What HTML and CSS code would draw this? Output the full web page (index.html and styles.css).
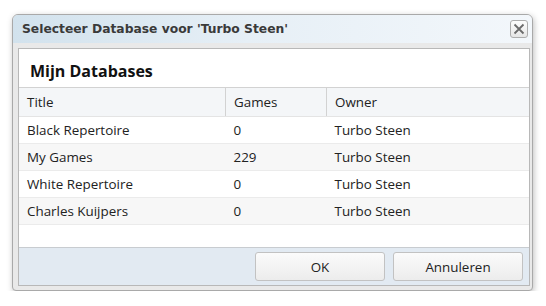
FILE: index.html
```html
<!DOCTYPE html>
<html lang="nl">
<head>
    <meta charset="UTF-8">
    <meta name="viewport" content="width=device-width, initial-scale=1.0">
    <title>Selecteer Database</title>
    <link rel="stylesheet" href="styles.css">
</head>
<body>
    <div class="dialog">
        <div class="titlebar">
            <span class="title">Selecteer Database voor 'Turbo Steen'</span>
            <button class="close" title="Sluiten">
                <svg width="12" height="12" viewBox="0 0 12 12">
                    <path d="M1.5 1.5 L10.5 10.5 M10.5 1.5 L1.5 10.5" stroke="#6b6b6b" stroke-width="1.8" fill="none"/>
                </svg>
            </button>
        </div>
        <div class="frame">
            <div class="panel">
                <h2>Mijn Databases</h2>
                <table class="grid">
                    <thead>
                        <tr>
                            <th class="col-title">Title</th>
                            <th class="col-games">Games</th>
                            <th>Owner</th>
                        </tr>
                    </thead>
                    <tbody>
                        <tr><td>Black Repertoire</td><td>0</td><td>Turbo Steen</td></tr>
                        <tr><td>My Games</td><td>229</td><td>Turbo Steen</td></tr>
                        <tr><td>White Repertoire</td><td>0</td><td>Turbo Steen</td></tr>
                        <tr><td>Charles Kuijpers</td><td>0</td><td>Turbo Steen</td></tr>
                    </tbody>
                </table>
                <div class="spacer"></div>
                <div class="footer">
                    <button class="button">OK</button>
                    <button class="button">Annuleren</button>
                </div>
            </div>
        </div>
    </div>
</body>
</html>
```
FILE: styles.css
```css
body {
    margin: 0;
    background-color: #fff;
    font-family: "Open Sans", "Noto Sans", sans-serif;
    color: #222;
}
.dialog {
    width: 519px;
    margin: 14px 0 0 12px;
    border: 1px solid #a9a9a9;
    border-radius: 6px 6px 4px 4px;
    background-color: #e9e9e9;
    box-shadow: 1px 2px 6px rgba(0,0,0,0.25);
    overflow: hidden;
}
.titlebar {
    height: 28px;
    display: flex;
    align-items: center;
    justify-content: space-between;
    padding: 0 4px 0 9px;
    background: linear-gradient(to right, #d2e2ed, #e6eff6 45%, #f3f7fb);
}
.title {
    font-family: "DejaVu Sans", Verdana, sans-serif;
    font-weight: bold;
    font-size: 12.3px;
    color: #3a3a3a;
}
.close {
    width: 18px;
    height: 18px;
    padding: 0;
    display: flex;
    align-items: center;
    justify-content: center;
    border: 1px solid #adadad;
    border-radius: 3px;
    background: linear-gradient(#fdfdfd, #e6e6e6);
}
.frame {
    padding: 5px 2px 4px 5px;
}
.panel {
    border: 1px solid #b8b8b8;
    background-color: #fff;
    display: flex;
    flex-direction: column;
    height: 236px;
}
h2 {
    margin: 0;
    height: 38px;
    line-height: 44px;
    padding-left: 11px;
    font-size: 16px;
    font-weight: bold;
    color: #111;
}
.grid {
    width: 100%;
    border-collapse: collapse;
    font-size: 13.4px;
}
.grid th {
    height: 28px;
    text-align: left;
    font-weight: normal;
    padding: 0 0 0 8px;
    background-color: #f4f6f8;
    border-top: 1px solid #d2d2d2;
    border-bottom: 1px solid #e4e4e4;
}
.grid th + th {
    border-left: 1px solid #d2d2d2;
}
.col-title {
    width: 198px;
}
.col-games {
    width: 92px;
}
.grid td {
    height: 26px;
    padding: 0 0 0 8px;
    border-bottom: 1px solid #ebebeb;
}
.grid td:nth-child(2) {
    padding-left: 8px;
}
.grid td:nth-child(3) {
    padding-left: 8px;
}
.grid tbody tr:nth-child(even) {
    background-color: #f7f7f7;
}
.spacer {
    flex: 1;
}
.footer {
    height: 37px;
    display: flex;
    justify-content: flex-end;
    align-items: center;
    gap: 8px;
    padding-right: 6px;
    background-color: #e2eaf2;
    border-top: 1px solid #c8ccd0;
}
.button {
    width: 130px;
    height: 29px;
    font-family: "Open Sans", "Noto Sans", sans-serif;
    font-size: 13.4px;
    color: #222;
    border: 1px solid #c2c2c2;
    border-radius: 3px;
    background: linear-gradient(#fbfbfb, #ececec);
}
```
